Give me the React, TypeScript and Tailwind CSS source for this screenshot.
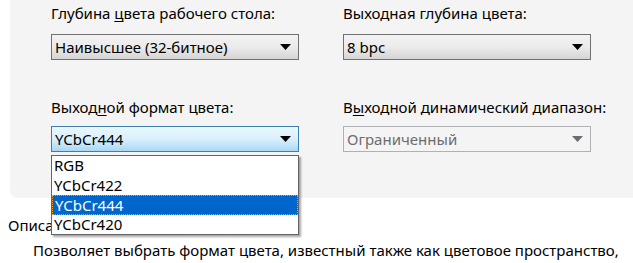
import React from "react";

function Arrow({ color = "#000" }: { color?: string }) {
  return (
    <svg width="11" height="6" viewBox="0 0 11 6" className="shrink-0">
      <polygon points="0,0 11,0 5.5,6" fill={color} />
    </svg>
  );
}

function Combo({ value, variant = "normal" }: { value: string; variant?: "normal" | "focus" | "disabled" }) {
  const box =
    variant === "focus"
      ? "border-[#3c7fb1] bg-gradient-to-b from-[#eaf6fd] via-[#d9f0fc] to-[#a7d9f5]"
      : variant === "disabled"
      ? "border-[#adb2b5] bg-[#f4f4f4] text-[#6d6d6d]"
      : "border-[#707070] bg-gradient-to-b from-[#f2f2f2] via-[#ebebeb] to-[#d5d5d5]";
  return (
    <div className={`flex h-[26px] w-[248px] items-center justify-between border pl-[3px] pr-[7px] ${box}`}>
      <span className="leading-none">{value}</span>
      <Arrow color={variant === "disabled" ? "#6d6d6d" : "#000"} />
    </div>
  );
}

export default function App() {
  const items = ["RGB", "YCbCr422", "YCbCr444", "YCbCr420"];
  return (
    <div
      className="relative h-[263px] w-[633px] overflow-hidden bg-white text-[15px] text-black"
      style={{ fontFamily: '"Noto Sans", "DejaVu Sans", sans-serif' }}
    >
      {/* Settings panel */}
      <div className="ml-[10px] h-[198px] rounded-bl-[8px] bg-[#f4f4f4] pl-[41px] pt-[2px]">
        <div className="grid grid-cols-[248px_248px] gap-x-[44px]">
          <div className="flex flex-col">
            <div className="h-[22px] whitespace-nowrap leading-[22px]">
              Глубина <span className="underline underline-offset-2">ц</span>вета рабочего стола:
            </div>
            <div className="mt-[10px]">
              <Combo value="Наивысшее (32-битное)" />
            </div>
            <div className="mt-[36px] h-[22px] whitespace-nowrap leading-[22px]">
              Выход<span className="underline underline-offset-2">н</span>ой формат цвета:
            </div>
            <div className="mt-[8px]">
              <Combo value="YCbCr444" variant="focus" />
            </div>
          </div>
          <div className="flex flex-col">
            <div className="h-[22px] whitespace-nowrap leading-[22px]">Выходная глубина цвета:</div>
            <div className="mt-[10px]">
              <Combo value="8 bpc" />
            </div>
            <div className="mt-[36px] h-[22px] whitespace-nowrap leading-[22px]">
              В<span className="underline underline-offset-2">ы</span>ходной динамический диапазон:
            </div>
            <div className="mt-[8px]">
              <Combo value="Ограниченный" variant="disabled" />
            </div>
          </div>
        </div>
      </div>

      {/* Description */}
      <div className="ml-[8px] mt-[17px] h-[20px] leading-[20px]">Описание:</div>
      <div className="ml-[33px] mt-[5px] whitespace-nowrap leading-[20px]">
        Позволяет выбрать формат цвета, известный также как цветовое пространство,
      </div>

      {/* Open dropdown list */}
      <div className="absolute left-[51px] top-[155px] w-[248px] border border-[#646464] bg-white shadow-[2px_2px_2px_rgba(0,0,0,0.35)]">
        {items.map((it) => (
          <div
            key={it}
            className={`h-[19.5px] pl-[2px] leading-[19px] ${
              it === "YCbCr444"
                ? "border border-dotted border-[#f0a030] bg-[#0066cc] pl-[1px] text-white"
                : ""
            }`}
          >
            {it}
          </div>
        ))}
      </div>
    </div>
  );
}
